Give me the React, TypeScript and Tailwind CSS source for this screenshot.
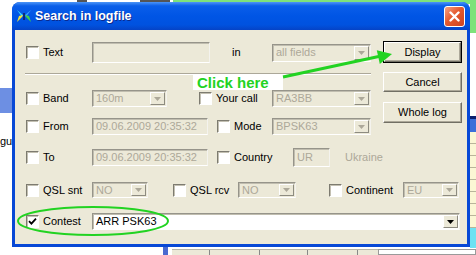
import clsx from "clsx";

type CellProps = { label: string; className?: string; checked?: boolean };
type FieldProps = { text?: string; className?: string; white?: boolean };

const Check = ({ checked = false }: { checked?: boolean }) => (
  <span className="w-[13px] h-[13px] shrink-0 flex items-center justify-center bg-white border border-t-[#7d7b70] border-l-[#7d7b70] border-r-white border-b-white shadow-[inset_1px_1px_0_#c3c0b2]">
    {checked && (
      <svg width="9" height="9" viewBox="0 0 9 9">
        <path d="M1 4.2 L3.4 6.6 L8 1.6" stroke="#000" strokeWidth="1.8" fill="none" />
      </svg>
    )}
  </span>
);

const CheckCell = ({ label, className, checked }: CellProps) => (
  <div className={clsx("flex items-center gap-[4px] shrink-0 text-black", className)}>
    <Check checked={checked} />
    <span>{label}</span>
  </div>
);

const sunken =
  "border border-t-[#96948a] border-l-[#96948a] border-r-[#f4f3ee] border-b-white shadow-[inset_1px_1px_0_#c0bdaf]";

const Field = ({ text, className, white = false }: FieldProps) => (
  <div
    className={clsx(
      "shrink-0 flex items-center pl-[3px] whitespace-nowrap",
      sunken,
      white ? "bg-white text-black" : "bg-[#ece9d8] text-[#aca899]",
      className
    )}
  >
    {text}
  </div>
);

const Combo = ({ text, className, white = false }: FieldProps) => (
  <div
    className={clsx(
      "shrink-0 flex items-stretch",
      sunken,
      white ? "bg-white text-black" : "bg-[#ece9d8] text-[#aca899]",
      className
    )}
  >
    <span className="flex-1 flex items-center pl-[3px] whitespace-nowrap overflow-hidden">{text}</span>
    <span className="w-[15px] my-[1px] mr-[1px] flex items-center justify-center bg-[#ece9d8] border border-t-white border-l-white border-r-[#8d8b80] border-b-[#8d8b80]">
      <svg width="7" height="4" viewBox="0 0 7 4">
        <path d="M0 0h7L3.5 4z" fill={white ? "#000" : "#aca899"} />
      </svg>
    </span>
  </div>
);

const Btn = ({ label, isDefault = false, className }: { label: string; isDefault?: boolean; className?: string }) => (
  <div className={clsx("w-[79px] shrink-0", isDefault && "border border-black", className)}>
    <div className="h-full flex items-center justify-center bg-[#ece9d8] text-black border border-t-white border-l-white border-r-[#716f64] border-b-[#716f64] shadow-[inset_-1px_-1px_0_#aca899]">
      {label}
    </div>
  </div>
);

export default function App() {
  return (
    <div className="relative w-[476px] h-[255px] overflow-hidden bg-white font-['Liberation_Sans',Arial,sans-serif] text-[11px] leading-none">
      {/* background app behind the dialog */}
      <div className="absolute left-[173px] top-0 w-[303px] h-[4px] bg-[#7de27a]" />
      <div className="absolute left-[470px] top-0 w-[6px] h-[33px] bg-[#7de27a]" />
      <div className="absolute left-[77px] top-0 w-[10px] h-[2px] bg-[#555]" />
      <div className="absolute left-[140px] top-0 w-[30px] h-[2px] bg-[#555]" />
      <div className="absolute left-0 top-[88px] w-[12px] h-[25px] bg-[#6d8fe3]" />
      <span className="absolute left-0 top-[136px] text-[11px] text-black">gu</span>
      <div className="absolute left-[470px] top-[116px] w-[6px] flex flex-col">
        <div className="h-[3px] bg-[#0b1e6e]" />
        <div className="h-[13px] bg-[#3b6fd9]" />
        <div className="h-[12px] bg-[#fbf7d4] border-b border-[#b9b59a]" />
        <div className="h-[12px] bg-[#fbf7d4] border-b border-[#b9b59a]" />
        <div className="h-[12px] bg-[#fbf7d4] border-b border-[#b9b59a]" />
        <div className="h-[12px] bg-[#fbf7d4] border-b border-[#b9b59a]" />
        <div className="h-[12px] bg-[#fbf7d4] border-b border-[#b9b59a]" />
        <div className="h-[12px] bg-[#fbf7d4] border-b border-[#b9b59a]" />
        <div className="h-[12px] bg-[#fbf7d4] border-b border-[#b9b59a]" />
        <div className="h-[12px] bg-[#fbf7d4] border-b border-[#b9b59a]" />
        <div className="h-[20px] bg-[#6fe2f2]" />
      </div>
      <div className="absolute left-[163px] top-[245px] w-[5px] h-[10px] bg-[#4a6ad0]" />
      <div className="absolute left-[172px] top-[249px] w-[206px] h-[6px] flex border-t border-[#b5b3a8] bg-[#ece9d8]">
        <div className="w-[38px] border-r border-[#888]" />
        <div className="w-[50px] border-r border-[#888]" />
        <div className="w-[48px] border-r border-[#888]" />
        <div className="w-[50px] border-r border-[#888]" />
      </div>
      <div className="absolute left-[378px] top-[249px] w-[98px] h-[6px] border border-[#9a9a9a] bg-white" />

      {/* dialog window */}
      <div className="absolute left-[12px] top-[2px] w-[458px] h-[245px] flex flex-col rounded-t-[8px] bg-[#0748d6]">
        <div className="h-[28px] shrink-0 flex items-center rounded-t-[8px] bg-[linear-gradient(180deg,#4c95f7_0%,#0a5ee9_14%,#0055e5_50%,#0052df_82%,#0543c6_100%)]">
          <svg className="ml-[4px]" width="16" height="12" viewBox="0 0 16 12">
            <path d="M1 0 L7 5 L6 7 Z" fill="#36d6ff" />
            <path d="M1 12 L6 7 L7 5 L3 6 Z" fill="#f2e23a" />
            <path d="M15 0 L9 5 L10 7 Z" fill="#3aa0ff" />
            <path d="M15 12 L10 7 L9 5 L13 6 Z" fill="#3fd04a" />
            <rect x="7" y="3" width="2" height="7" fill="#0d2a7a" />
          </svg>
          <span className="ml-[3px] text-white font-bold text-[12.5px] [text-shadow:1px_1px_0_#0b2a8f]">Search in logfile</span>
          <div className="ml-auto mr-[5px] w-[21px] h-[21px] rounded-[3px] border border-white flex items-center justify-center bg-[linear-gradient(135deg,#f5a284_0%,#e55a2f_45%,#cc4320_100%)]">
            <svg width="11" height="11" viewBox="0 0 11 11">
              <path d="M1.5 1.5 L9.5 9.5 M9.5 1.5 L1.5 9.5" stroke="#fff" strokeWidth="2.4" strokeLinecap="round" />
            </svg>
          </div>
        </div>

        <div className="mx-[3px] h-[214px] shrink-0 bg-[#ece9d8]">
          <div className="flex">
            <div className="w-[356px] flex flex-col">
              <div className="mt-[12px] h-[21px] flex items-center pl-[11px]">
                <CheckCell label="Text" className="w-[66px]" />
                <Field className="w-[118px] h-[21px]" />
                <span className="ml-[22px] w-[40px] text-black">in</span>
                <Combo text="all fields" className="w-[99px] h-[18px]" />
              </div>
              <div className="mt-[10px] ml-[10px] w-[346px] h-[2px] border-t border-t-[#aca899] border-b border-b-white" />
              <div className="mt-[15px] h-[17px] flex items-center pl-[11px]">
                <CheckCell label="Band" className="w-[66px]" />
                <Combo text="160m" className="w-[75px] h-[17px]" />
                <CheckCell label="Your call" className="ml-[32px] w-[73px]" />
                <Combo text="RA3BB" className="w-[99px] h-[17px]" />
              </div>
              <div className="mt-[11px] h-[17px] flex items-center pl-[11px]">
                <CheckCell label="From" className="w-[66px]" />
                <Field text="09.06.2009 20:35:32" className="w-[116px] h-[17px]" />
                <CheckCell label="Mode" className="ml-[9px] w-[55px]" />
                <Combo text="BPSK63" className="w-[99px] h-[17px]" />
              </div>
              <div className="mt-[13px] h-[19px] flex items-center pl-[11px]">
                <CheckCell label="To" className="w-[66px]" />
                <Field text="09.06.2009 20:35:32" className="w-[116px] h-[17px]" />
                <CheckCell label="Country" className="ml-[9px] w-[76px]" />
                <Field text="UR" className="w-[37px] h-[19px]" />
                <span className="ml-[15px] text-[#aca899]">Ukraine</span>
              </div>
            </div>
            <div className="ml-[12px] flex flex-col">
              <Btn label="Display" isDefault className="mt-[11px] h-[22px]" />
              <Btn label="Cancel" className="mt-[9px] h-[20px]" />
              <Btn label="Whole log" className="mt-[10px] h-[21px]" />
            </div>
          </div>

          <div className="mt-[15px] h-[16px] flex items-center pl-[11px]">
            <CheckCell label="QSL snt" className="w-[66px]" />
            <Combo text="NO" className="w-[56px] h-[16px]" />
            <CheckCell label="QSL rcv" className="ml-[25px] w-[65px]" />
            <Combo text="NO" className="w-[58px] h-[16px]" />
            <CheckCell label="Continent" className="ml-[33px] w-[74px]" />
            <Combo text="EU" className="w-[56px] h-[16px]" />
          </div>

          <div className="mt-[15px] h-[17px] flex items-center pl-[11px]">
            <CheckCell label="Contest" checked className="w-[66px]" />
            <Combo text="ARR PSK63" white className="w-[368px] h-[17px]" />
          </div>
        </div>
      </div>

      {/* annotation drawn over the screenshot */}
      <div className="absolute left-[193px] top-[74px] w-[90px] h-[16px] bg-white flex items-center pl-[4px]">
        <span className="text-[15px] font-bold text-[#22d322] leading-none">Click here</span>
      </div>
      <svg className="absolute left-0 top-0 pointer-events-none" width="476" height="255" viewBox="0 0 476 255">
        <line x1="283" y1="77" x2="381" y2="56" stroke="#22d322" strokeWidth="3" />
        <path d="M392 54 L376.8 50.3 L379.8 63.9 Z" fill="#22d322" />
        <ellipse cx="93" cy="221" rx="75" ry="14" fill="none" stroke="#22d322" strokeWidth="2" />
      </svg>
    </div>
  );
}
